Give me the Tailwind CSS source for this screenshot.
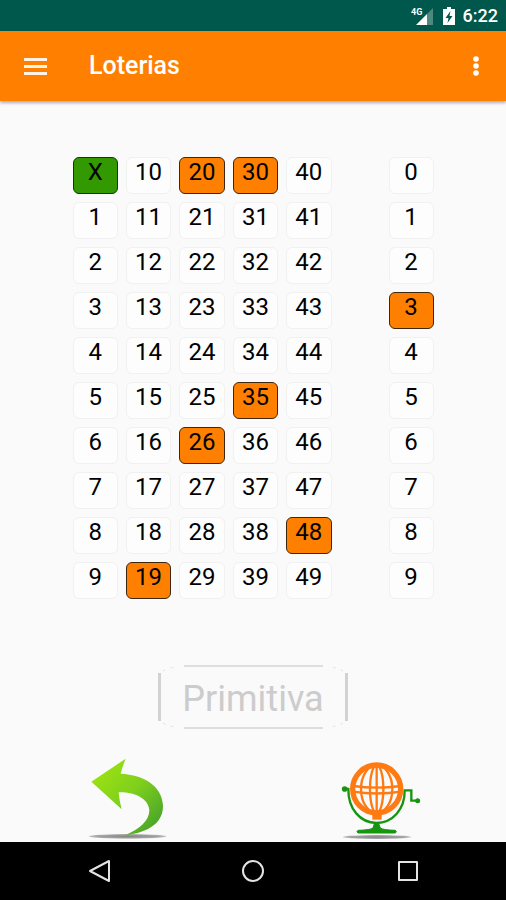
<!DOCTYPE html>
<html lang="es">
<head>
    <meta charset="UTF-8">
    <meta name="viewport" content="width=device-width, initial-scale=1.0">
    <title>Loterias</title>
    <script src="https://cdn.jsdelivr.net/npm/@tailwindcss/browser@4"></script>
</head>
<body class="min-h-screen flex flex-col bg-[#fafafa] text-black font-['Roboto',sans-serif]">
    <!-- Status bar -->
    <div class="h-[31px] shrink-0 bg-[#00574b] text-white flex items-center justify-end px-2">
        <svg class="w-6 h-5 mr-2" viewBox="0 0 24 20">
            <path d="M22 2v17h-6V8z" fill="#fff" fill-opacity=".3"/>
            <path d="M16 8v11H5z" fill="#fff"/>
            <text x="0" y="9" font-size="9" font-weight="700" fill="#fff">4G</text>
        </svg>
        <svg class="w-3 h-5 mr-2" viewBox="0 0 12 20">
            <path d="M4 1h4v2h4v16H0V3h4z" fill="#fff"/>
            <path d="M7.500 5L2.500 12h3L4.500 17l5-7h-3z" fill="#00574b"/>
        </svg>
        <span class="text-lg font-medium">6:22</span>
    </div>

    <header class="h-[70px] shrink-0 bg-[#ff8000] text-white flex items-center px-6 shadow-[0_2px_3px_rgba(60,50,90,0.4)]">
        <button type="button" aria-label="Menu">
            <svg class="w-6 h-5" viewBox="0 0 24 20" fill="#fff" fill-opacity=".9">
                <path d="M0 2h23v3H0zM0 9h23v3H0zM0 16h23v3H0z"/>
            </svg>
        </button>
        <h1 class="ml-[41px] text-[25px] font-medium">Loterias</h1>
        <button type="button" class="ml-auto" aria-label="Opciones">
            <svg class="w-3 h-6" viewBox="0 0 12 24" fill="#fff">
                <circle cx="6" cy="5" r="2.800"/>
                <circle cx="6" cy="12" r="2.800"/>
                <circle cx="6" cy="19" r="2.800"/>
            </svg>
        </button>
    </header>

    <main class="flex-1 flex flex-col items-center pt-14">
        <div class="flex gap-[57px]">
            <div id="numeros" class="grid grid-cols-5 gap-2 w-[259px]"></div>
            <div id="reintegro" class="grid gap-2 w-[45px]"></div>
        </div>

        <button type="button" class="relative mt-[66px] w-[190px] h-16 pt-1 text-4xl text-[#cccccc]">
            <svg class="absolute inset-0 w-full h-full" viewBox="0 0 190 64" fill="none" stroke="#d2d2d2">
                <path d="M1.500 8v48M188.500 8v48" stroke-width="3"/>
                <path d="M26 1h139M26 63h139" stroke="#dedede" stroke-width="2"/>
                <path d="M5 6q5-3 13-4M185 6q-5-3-13-4M5 58q5 3 13 4M185 58q-5 3-13 4" stroke="#e2e2e2" stroke-dasharray="3 5"/>
            </svg>
            <span class="relative">Primitiva</span>
        </button>

        <div class="mt-auto w-full grid grid-cols-2 justify-items-center">
            <button type="button" aria-label="Volver">
                <svg class="w-[88px] h-[85px]" viewBox="8 21 264 255">
                    <defs>
                        <linearGradient id="verde" x1="0" y1="0" x2="1" y2="1">
                            <stop offset="0" stop-color="#a5e60f"/>
                            <stop offset=".5" stop-color="#7fd01c"/>
                            <stop offset="1" stop-color="#3c9a2c"/>
                        </linearGradient>
                        <radialGradient id="sombra">
                            <stop offset="0" stop-color="#858585"/>
                            <stop offset=".8" stop-color="#a5a5a5"/>
                            <stop offset="1" stop-color="#c8c8c8"/>
                        </radialGradient>
                    </defs>
                    <ellipse cx="142" cy="259" rx="117" ry="7" fill="url(#sombra)"/>
                    <path d="M33 95L136 26Q127 48 121 71C192 74 247 110 248 168C248 218 205 248 136 255C178 236 207 213 207 180C205 148 167 126 115 127Q117 153 124 178Z" fill="url(#verde)"/>
                </svg>
            </button>
            <button type="button" aria-label="Sortear">
                <svg class="w-[88px] h-[85px]" viewBox="17 21 264 255" fill="none">
                    <ellipse cx="140" cy="261" rx="103" ry="6" fill="url(#sombra)"/>
                    <g stroke="#16960f" stroke-width="7">
                        <path d="M44 117H54C53 177 90 218 138 219C187 218 224 178 223 121H243V152H260"/>
                        <circle cx="43" cy="117" r="5" fill="#16960f"/>
                        <circle cx="262" cy="152" r="4" fill="#16960f"/>
                        <path d="M133 218h11l6 16q8 6 45 7q6 4 0 8H83q-6-4 0-8q37-1 45-7z" fill="#16960f" stroke-width="3"/>
                    </g>
                    <path d="M126 194h28v15h-28z" fill="#ff7a12"/>
                    <g stroke="#ff7a12" stroke-width="7">
                        <circle cx="139" cy="117" r="72" stroke-width="16"/>
                        <ellipse cx="139" cy="117" rx="47" ry="72"/>
                        <ellipse cx="139" cy="117" rx="20" ry="72"/>
                        <path d="M139 44v146M68 108Q139 118 212 108M68 125Q139 136 212 125"/>
                    </g>
                </svg>
            </button>
        </div>
    </main>

    <!-- Android navigation -->
    <nav class="h-[58px] shrink-0 bg-black grid grid-cols-[1fr_56px_1fr] justify-items-center items-center">
        <button type="button" aria-label="Atrás" class="mr-7">
            <svg class="w-6 h-6" viewBox="0 0 24 24" fill="none" stroke="#e4e4e4" stroke-width="2" stroke-linejoin="round">
                <path d="M22 2v20L3 12z"/>
            </svg>
        </button>
        <button type="button" aria-label="Inicio">
            <svg class="w-6 h-6" viewBox="0 0 24 24" fill="none" stroke="#e4e4e4" stroke-width="2">
                <circle cx="12" cy="12" r="10"/>
            </svg>
        </button>
        <button type="button" aria-label="Recientes" class="ml-7">
            <svg class="w-6 h-6" viewBox="0 0 24 24" fill="none" stroke="#e4e4e4" stroke-width="2" stroke-linejoin="round">
                <path d="M3 3h18v18H3z"/>
            </svg>
        </button>
    </nav>

    <script>
        const base = 'h-[37px] flex justify-center rounded-md border text-2xl leading-7 ';
        const normal = base + 'bg-[#fdfdfd] border-[#f1f1f1]';
        const marcado = base + 'bg-[#ff8000] border-[#40260c]';
        const verde = base + 'bg-[#339900] border-[#12350a]';

        function crearBoton(panel, texto, clase) {
            const boton = document.createElement('button');
            boton.type = 'button';
            boton.className = clase;
            boton.textContent = texto;
            panel.appendChild(boton);
        }

        const elegidos = [19, 20, 26, 30, 35, 48];
        const numeros = document.querySelector('#numeros');
        const reintegro = document.querySelector('#reintegro');

        for (let fila = 0; fila < 10; fila++) {
            for (let col = 0; col < 5; col++) {
                const n = col * 10 + fila;
                if (n === 0) {
                    crearBoton(numeros, 'X', verde);
                } else {
                    crearBoton(numeros, n, elegidos.includes(n) ? marcado : normal);
                }
            }
            crearBoton(reintegro, fila, fila === 3 ? marcado : normal);
        }
    </script>
</body>
</html>
